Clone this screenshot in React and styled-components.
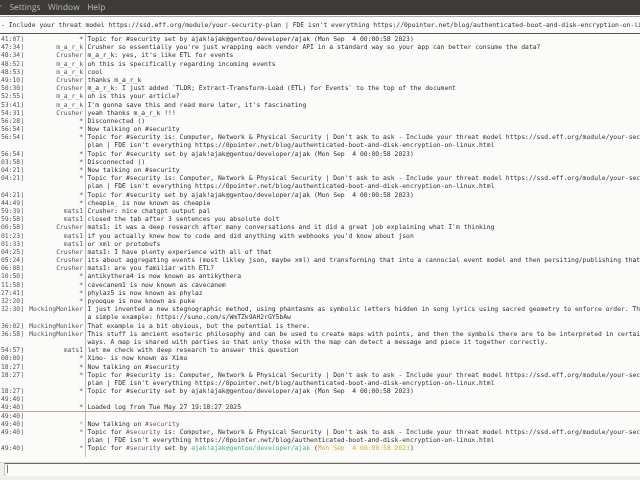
import React from "react";
import styled, { createGlobalStyle } from "styled-components";

const TOPIC_A = "Topic for #security is: Computer, Network & Physical Security | Don't ask to ask - Include your threat model https://ssd.eff.org/module/your-security-";
const TOPIC_B = "plan | FDE isn't everything https://0pointer.net/blog/authenticated-boot-and-disk-encryption-on-linux.html";
const TOPIC_SET = "Topic for #security set by ajak!ajak@gentoo/developer/ajak (Mon Sep  4 00:00:58 2023)";

const rows = [
  ["41:07]", "*", TOPIC_SET],
  ["47:34]", "m_a_r_k", "Crusher so essentially you're just wrapping each vendor API in a standard way so your app can better consume the data?"],
  ["48:34]", "Crusher", "m_a_r_k: yes, it's like ETL for events"],
  ["48:52]", "m_a_r_k", "oh this is specifically regarding incoming events"],
  ["48:53]", "m_a_r_k", "cool"],
  ["49:10]", "Crusher", "thanks m_a_r_k"],
  ["50:30]", "Crusher", "m_a_r_k: I just added `TLDR; Extract-Transform-Load (ETL) for Events` to the top of the document"],
  ["52:55]", "m_a_r_k", "oh is this your article?"],
  ["53:41]", "m_a_r_k", "I'm gonna save this and read more later, it's fascinating"],
  ["54:31]", "Crusher", "yeah thanks m_a_r_k !!!"],
  ["56:28]", "*", "Disconnected ()"],
  ["56:54]", "*", "Now talking on #security"],
  ["56:54]", "*", TOPIC_A],
  ["", "", TOPIC_B],
  ["56:54]", "*", TOPIC_SET],
  ["03:58]", "*", "Disconnected ()"],
  ["04:21]", "*", "Now talking on #security"],
  ["04:21]", "*", TOPIC_A],
  ["", "", TOPIC_B],
  ["04:21]", "*", TOPIC_SET],
  ["44:49]", "*", "cheapie_ is now known as cheapie"],
  ["59:39]", "mats1", "Crusher: nice chatgpt output pal"],
  ["59:58]", "mats1", "closed the tab after 3 sentences you absolute dolt"],
  ["00:58]", "Crusher", "mats1: it was a deep research after many conversations and it did a great job explaining what I'm thinking"],
  ["01:23]", "mats1", "if you actually knew how to code and did anything with webhooks you'd know about json"],
  ["01:33]", "mats1", "or xml or protobufs"],
  ["04:25]", "Crusher", "mats1: I have plenty experience with all of that"],
  ["05:24]", "Crusher", "its about aggregating events (most likley json, maybe xml) and transforming that into a cannocial event model and then persiting/publishing that i"],
  ["06:08]", "Crusher", "mats1: are you familiar with ETL?"],
  ["10:50]", "*", "antikythera4 is now known as antikythera"],
  ["11:58]", "*", "cavecanem1 is now known as cavecanem"],
  ["27:41]", "*", "phylaz5 is now known as phylaz"],
  ["32:20]", "*", "pyooque is now known as puke"],
  ["32:30]", "MockingMoniker", "I just invented a new stegnographic method, using phantasms as symbolic letters hidden in song lyrics using sacred geometry to enforce order. Thi"],
  ["", "", "a simple example: https://suno.com/s/WmTZk9AH2rGY5bAw"],
  ["36:02]", "MockingMoniker", "That example is a bit obvious, but the potential is there."],
  ["36:58]", "MockingMoniker", "This stuff is ancient esoteric philosophy and can be used to create maps with points, and then the symbols there are to be interpreted in certain"],
  ["", "", "ways. A map is shared with parties so that only those with the map can detect a message and piece it together correctly."],
  ["54:57]", "mats1", "let me check with deep research to answer this question"],
  ["08:00]", "*", "Ximo- is now known as Ximo"],
  ["18:27]", "*", "Now talking on #security"],
  ["18:27]", "*", TOPIC_A],
  ["", "", TOPIC_B],
  ["18:27]", "*", TOPIC_SET],
  ["49:40]", "", ""],
  ["49:40]", "*", "Loaded log from Tue May 27 19:18:27 2025"],
];

const GlobalStyle = createGlobalStyle`
  html, body {
    margin: 0;
    padding: 0;
    background: #fbfbf9;
  }
`;

const Window = styled.div`
  width: 640px;
  height: 480px;
  display: flex;
  flex-direction: column;
  overflow: hidden;
  background: #fbfbf9;
  color: #2f3236;
  font-family: "DejaVu Sans Mono", monospace;
  font-size: 6.38px;
  text-rendering: geometricPrecision;
  filter: blur(0.4px);
`;

const MenuBar = styled.div`
  height: 15px;
  flex: none;
  display: flex;
  align-items: center;
  gap: 7.5px;
  margin-left: -1.5px;
  background: #3c3b37;
  color: #b9b8b2;
  font-family: "Open Sans", sans-serif;
  font-size: 8.4px;
  overflow: hidden;
`;

const MenuItem = styled.span`
  white-space: nowrap;
`;

const TopicBar = styled.div`
  height: 18px;
  flex: none;
  display: flex;
  align-items: center;
  padding: 0 0 1px 1px;
  border-top: 1px solid #a9a8a4;
  border-bottom: 1px solid #55544f;
  margin-top: 1px;
  box-sizing: border-box;
  white-space: pre;
  overflow: hidden;
`;

const Log = styled.div`
  flex: none;
  height: 423px;
  display: flex;
  flex-direction: column;
  overflow: hidden;
`;

const Row = styled.div`
  flex: none;
  height: 8.2px;
  line-height: 8.2px;
  display: grid;
  grid-template-columns: 85px 1fr;
  white-space: pre;
  ${(p) => p.$marker && "box-shadow: 0 -1px 0 #c9a18e;"}
`;

const Gutter = styled.div`
  display: flex;
  justify-content: space-between;
  padding: 0 2px 0 1px;
  color: #55575a;
`;

const Star = styled.span`
  color: ${(p) => p.$color || "inherit"};
`;

const Message = styled.div`
  border-left: 1px solid #bcbcba;
  padding-left: 1.5px;
  overflow: hidden;
`;

// the column rule carries on through the gaps above and below the rows
const Filler = styled.div`
  flex: ${(p) => (p.$top ? "0 0 1px" : "1")};
  margin-left: 85px;
  border-left: 1px solid #bcbcba;
`;

const Tint = styled.span`
  color: ${(p) => p.$color};
`;

const InputWrap = styled.div`
  flex: none;
  height: 18px;
  margin-top: 5px;
  border-top: 1px solid #d8d7d3;
  box-sizing: border-box;
  background: #efefec;
`;

const InputField = styled.div`
  height: 13px;
  margin-left: 4px;
  border-top: 1px solid #6b6a67;
  border-left: 1px solid #c9c8c5;
  box-sizing: border-box;
  background: #fbfbf9;
  padding: 1px 0 0 2px;
`;

const Cursor = styled.div`
  width: 1px;
  height: 8px;
  background: #77787a;
`;

function App() {
  return (
    <Window>
      <GlobalStyle />
      <MenuBar>
        <MenuItem>r</MenuItem>
        <MenuItem>Settings</MenuItem>
        <MenuItem>Window</MenuItem>
        <MenuItem>Help</MenuItem>
      </MenuBar>
      <TopicBar>- Include your threat model https://ssd.eff.org/module/your-security-plan | FDE isn't everything https://0pointer.net/blog/authenticated-boot-and-disk-encryption-on-linux.html</TopicBar>
      <Log>
        <Filler $top />
        {rows.map(([time, nick, text], i) => (
          <Row key={i}>
            <Gutter>
              <span>{time}</span>
              <span>{nick}</span>
            </Gutter>
            <Message>{text}</Message>
          </Row>
        ))}
        <Row $marker>
          <Gutter>
            <span>49:40]</span>
          </Gutter>
          <Message />
        </Row>
        <Row>
          <Gutter>
            <span>49:40]</span>
            <Star $color="#6fbf55">*</Star>
          </Gutter>
          <Message>
            Now talking on <Tint $color="#75507b">#security</Tint>
          </Message>
        </Row>
        <Row>
          <Gutter>
            <span>49:40]</span>
            <Star $color="#a9568f">*</Star>
          </Gutter>
          <Message>
            Topic for <Tint $color="#75507b">#security</Tint> is: Computer, Network &amp; Physical Security | Don't ask to ask - Include your threat model https://ssd.eff.org/module/your-security-
          </Message>
        </Row>
        <Row>
          <Gutter />
          <Message>{TOPIC_B}</Message>
        </Row>
        <Row>
          <Gutter>
            <span>49:40]</span>
            <Star $color="#a9568f">*</Star>
          </Gutter>
          <Message>
            Topic for <Tint $color="#75507b">#security</Tint> set by <Tint $color="#35b98c">ajak!ajak@gentoo/developer/ajak</Tint> (<Tint $color="#d8b02e">Mon Sep  4 00:00:58 2023</Tint>)
          </Message>
        </Row>
        <Filler />
      </Log>
      <InputWrap>
        <InputField>
          <Cursor />
        </InputField>
      </InputWrap>
    </Window>
  );
}

export default App;
